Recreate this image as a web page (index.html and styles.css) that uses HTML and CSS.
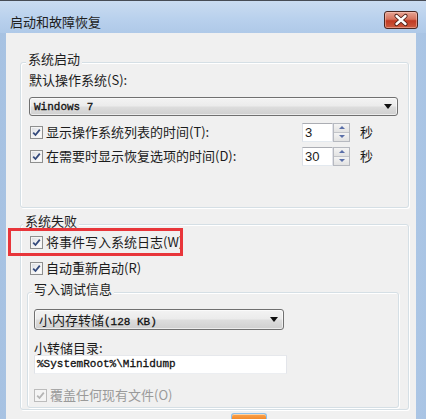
FILE: index.html
```html
<!DOCTYPE html>
<html lang="zh-CN">
<head>
    <meta charset="UTF-8">
    <title>启动和故障恢复</title>
    <link rel="stylesheet" href="styles.css">
</head>
<body>
    <div class="window">
        <div class="titlebar">
            <span class="title">启动和故障恢复</span>
            <button class="close" aria-label="关闭">
                <svg width="34" height="18" viewBox="0 0 34 18">
                    <path d="M12.5 5 L21.5 13 M21.5 5 L12.5 13" stroke="#4a1c14" stroke-width="4.2" stroke-linecap="round"/>
                    <path d="M12.5 5 L21.5 13 M21.5 5 L12.5 13" stroke="#ffffff" stroke-width="2.4" stroke-linecap="round"/>
                </svg>
            </button>
        </div>

        <div class="client">
            <fieldset class="group group-startup">
                <legend>系统启动</legend>
                <div class="field-label">默认操作系统(S):</div>
                <div class="combo combo-os">
                    <span class="mono">Windows 7</span>
                    <span class="arrow"></span>
                </div>
                <div class="row row-first">
                    <label class="check check-wide"><span class="box"></span>显示操作系统列表的时间(T):</label>
                    <div class="spin">
                        <span class="spin-input">3</span>
                        <span class="spin-btns"><span class="spin-up"></span><span class="spin-down"></span></span>
                    </div>
                    <span class="unit">秒</span>
                </div>
                <div class="row row-next">
                    <label class="check check-wide"><span class="box"></span>在需要时显示恢复选项的时间(D):</label>
                    <div class="spin">
                        <span class="spin-input">30</span>
                        <span class="spin-btns"><span class="spin-up"></span><span class="spin-down"></span></span>
                    </div>
                    <span class="unit">秒</span>
                </div>
            </fieldset>

            <fieldset class="group group-failure">
                <legend>系统失败</legend>
                <div class="row row-first">
                    <label class="check check-indent"><span class="box"></span>将事件写入系统日志(W)</label>
                </div>
                <div class="row row-gap">
                    <label class="check check-indent"><span class="box"></span>自动重新启动(R)</label>
                </div>

                <fieldset class="group group-debug">
                    <legend>写入调试信息</legend>
                    <div class="combo combo-dump">
                        <span>小内存转储<span class="mono">(128 KB)</span></span>
                        <span class="arrow"></span>
                    </div>
                    <div class="field-label dir-label">小转储目录:</div>
                    <div class="textbox mono">%SystemRoot%\Minidump</div>
                    <div class="row row-last">
                        <label class="check disabled"><span class="box"></span>覆盖任何现有文件(O)</label>
                    </div>
                </fieldset>
            </fieldset>

            <div class="buttons">
                <span class="ok-edge"></span>
            </div>

            <div class="highlight"></div>
        </div>
    </div>
</body>
</html>
```

FILE: styles.css
```css
*, *::before, *::after {
    box-sizing: border-box;
}

html, body {
    width: 426px;
    height: 419px;
    margin: 0;
    overflow: hidden;
}
body {
    font-family: "Noto Sans CJK SC", "Noto Sans", sans-serif;
    font-size: 13px;
    color: #1c1c1c;
    background: #b9d1ea;
}
.mono {
    font-family: "Liberation Mono", monospace;
    font-size: 11px;
    color: #111;
    -webkit-text-stroke: 0.3px #111;
}

.window {
    display: flex;
    flex-direction: column;
    height: 419px;
    background: linear-gradient(to right, #a7c2e2, #bad1eb 25%, #bdd3ec 75%, #a9c4e4);
}
.titlebar {
    height: 33px;
    flex: 0 0 33px;
    display: flex;
    align-items: flex-start;
    padding: 0 8px 0 10px;
    border-top: 1px solid #474c55;
    background: linear-gradient(#cadcf1, #b9d1ed 55%, #afc9e8);
}
.title {
    margin-top: 14px;
    line-height: 14px;
    color: #1e1e1e;
}
.close {
    margin: 10px 0 0 auto;
    width: 34px;
    height: 18px;
    padding: 0;
    border: 1px solid #4a2620;
    border-radius: 3px;
    background: linear-gradient(#e6a595, #d6735d 45%, #c13a22 55%, #cc5c41);
    box-shadow: inset 0 0 0 1px rgba(255, 210, 200, 0.45);
    display: flex;
    align-items: center;
    justify-content: center;
}
.close svg {
    display: block;
    margin: -1px;
}

.client {
    flex: 1;
    position: relative;
    margin: 0 10px 0 6px;
    padding: 19px 0 0 14px;
    background: #f0f0f0;
    overflow: hidden;
}

/* group boxes */
fieldset.group {
    margin: 0;
    min-width: 0;
    width: 389px;
    border: 1px solid #d5dfe5;
    border-radius: 3px;
    box-shadow: inset 1px 1px 0 #fff, 1px 1px 0 #fff;
}
fieldset.group legend {
    padding: 0 2px 6px;
    line-height: 14px;
    background: #f0f0f0;
    color: #1e1e1e;
}
.group-startup {
    padding: 0 10px 41px 8px;
}
.group-startup legend {
    margin-left: -3px;
}
.group-failure {
    margin-top: 6px !important;
    padding: 0 10px 1px 6px;
}
.group-failure legend {
    margin-left: -4px;
    padding-top: 2px;
}
.group-debug {
    width: 372px !important;
    margin-top: 4px !important;
    padding: 7px 6px 2px 6px;
}
.group-debug legend {
    margin-left: -2px;
}

.field-label {
    line-height: 16px;
}
.dir-label {
    margin-top: 11px;
    line-height: 14px;
}

/* combo boxes */
.combo {
    display: flex;
    align-items: center;
    justify-content: space-between;
    padding: 0 5px 0 4px;
    border: 1px solid #707070;
    border-radius: 3px;
    background: linear-gradient(#f3f3f3, #ebebeb 48%, #dddddd 52%, #cfcfcf);
    box-shadow: inset 0 0 0 1px rgba(255, 255, 255, 0.6);
}
.combo-os {
    height: 19px;
    margin-top: 9px;
    width: 369px;
}
.combo-dump {
    height: 21px;
    width: 250px;
}
.arrow {
    width: 0;
    height: 0;
    border-left: 4px solid transparent;
    border-right: 4px solid transparent;
    border-top: 5px solid #101010;
}

/* rows and checkboxes */
.row {
    display: flex;
    align-items: center;
    height: 20px;
}
.row-first {
    margin-top: 6px;
}
.group-failure .row-first {
    margin-top: -2px;
}
.row-next {
    margin-top: 4px;
}
.row-gap {
    margin-top: 6px;
}
.row-last {
    margin-top: 11px;
}
.check {
    display: flex;
    align-items: center;
    line-height: 16px;
    white-space: nowrap;
}
.check-wide {
    width: 273px;
    padding-left: 1px;
}
.check-indent {
    padding-left: 3px;
}
.box {
    width: 13px;
    height: 13px;
    margin-right: 3px;
    border: 1px solid #8e8f8f;
    background: url("data:image/svg+xml,%3Csvg xmlns='http://www.w3.org/2000/svg' width='11' height='11'%3E%3Cpath d='M2.2 5.6 L4.5 8 L8.8 2.6' fill='none' stroke='%23344a7c' stroke-width='1.8'/%3E%3C/svg%3E") center / 11px 11px no-repeat,
                linear-gradient(135deg, #d8dbe0, #f6f6f6 60%, #ffffff);
    box-shadow: inset 0 0 0 1px #f4f4f4;
}
.disabled {
    color: #9a9a9a;
}
.disabled .box {
    border-color: #bcbcbc;
    background: url("data:image/svg+xml,%3Csvg xmlns='http://www.w3.org/2000/svg' width='11' height='11'%3E%3Cpath d='M2.2 5.6 L4.5 8 L8.8 2.6' fill='none' stroke='%23b4b4b4' stroke-width='1.8'/%3E%3C/svg%3E") center / 11px 11px no-repeat,
                #f4f4f4;
}

/* spin boxes */
.spin {
    display: flex;
    width: 48px;
    height: 19px;
}
.spin-input {
    flex: 1;
    padding-left: 2px;
    line-height: 17px;
    font-family: "Liberation Sans", sans-serif;
    font-size: 13px;
    background: #fff;
    border: 1px solid;
    border-color: #abadb3 #e2e3ea #e3e9ef #dbdfe6;
}
.spin-btns {
    width: 17px;
    display: flex;
    flex-direction: column;
    border: 1px solid #b6b9c0;
}
.spin-up, .spin-down {
    flex: 1;
    display: flex;
    align-items: center;
    justify-content: center;
    background: linear-gradient(#f4f4f4, #e2e2e2);
}
.spin-up {
    border-bottom: 1px solid #c2c4c9;
}
.spin-up::after, .spin-down::after {
    content: "";
    width: 0;
    height: 0;
    border-left: 3px solid transparent;
    border-right: 3px solid transparent;
}
.spin-up::after {
    border-bottom: 3px solid #5a6fa8;
}
.spin-down::after {
    border-top: 3px solid #5a6fa8;
}
.unit {
    margin-left: 10px;
    line-height: 16px;
}

/* edit box */
.textbox {
    width: 253px;
    height: 19px;
    padding-left: 2px;
    line-height: 17px;
    background: #fff;
    border: 1px solid;
    border-color: #e6e8ec #e3e5ea #eceef1 #dfe2e7;
}

/* bottom button edge */
.buttons {
    display: flex;
    margin-top: 3px;
    padding-left: 211px;
}
.ok-edge {
    width: 36px;
    height: 8px;
    border: 1px solid #8cc0ec;
    border-bottom: none;
    border-radius: 3px 3px 0 0;
    background: linear-gradient(#f9a451, #f1801c);
    box-shadow: inset 0 1px 0 #ffd4a6;
}

/* red annotation box */
.highlight {
    position: absolute;
    left: 2px;
    top: 195px;
    width: 175px;
    height: 28px;
    border: 3px solid #e8353a;
}
```
